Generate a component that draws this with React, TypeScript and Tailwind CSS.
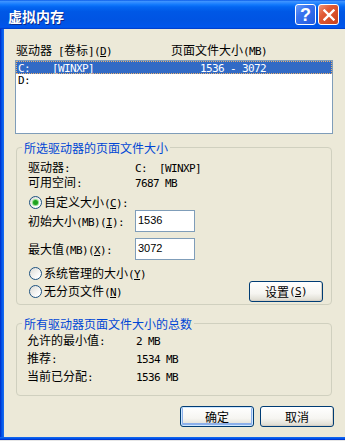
import React from "react";

const CJK = /[\u2E80-\u9FFF\uF900-\uFAFF\uFF00-\uFFEF]/;

function M({ t }: { t: string }) {
  const runs: { cjk: boolean; s: string }[] = [];
  for (const ch of t) {
    const c = CJK.test(ch);
    const last = runs[runs.length - 1];
    if (last && last.cjk === c) last.s += ch;
    else runs.push({ cjk: c, s: ch });
  }
  return (
    <>
      {runs.map((r, i) =>
        r.cjk ? (
          <span key={i} className="font-['Noto_Sans_CJK_SC',sans-serif] text-[12px]">
            {r.s}
          </span>
        ) : (
          <span key={i} className="font-['DejaVu_Sans_Mono',monospace] text-[11px] tracking-[-0.62px]">
            {r.s.split(/(&.)/).map((p, j) =>
              p.length === 2 && p[0] === "&" ? (
                <span key={j} className="underline underline-offset-[1px]">
                  {p[1]}
                </span>
              ) : (
                p
              )
            )}
          </span>
        )
      )}
    </>
  );
}

function Radio({ on }: { on?: boolean }) {
  return (
    <span className="w-[13px] h-[13px] rounded-full border border-[#1C5180] bg-[linear-gradient(135deg,#DCDBD5,#FFFFFF_80%)] flex items-center justify-center shrink-0">
      {on && <span className="w-[5px] h-[5px] rounded-full bg-[#1FA11F] shadow-[0_0_0_1px_#8EE08E]" />}
    </span>
  );
}

function Btn({ children, def }: { children: React.ReactNode; def?: boolean }) {
  return (
    <div
      className={
        def
          ? "w-[74px] h-[21px] rounded-[3px] border border-[#003C74] bg-[linear-gradient(180deg,#FFFFFF_0%,#F6F5F1_60%,#E3E1D8_90%,#D6D0C5_100%)] flex items-center justify-center shadow-[inset_0_0_0_1px_#CEE7FF,inset_0_-1px_0_2px_#8DB0EA]"
          : "w-[74px] h-[21px] rounded-[3px] border border-[#003C74] bg-[linear-gradient(180deg,#FFFFFF_0%,#F6F5F1_60%,#E3E1D8_90%,#D6D0C5_100%)] flex items-center justify-center shadow-[inset_-1px_-1px_0_0_#D6D0C5]"
      }
    >
      {children}
    </div>
  );
}

export default function App() {
  return (
    <div className="w-[345px] h-[441px] flex flex-col overflow-hidden bg-[#ECE9D8] text-black leading-[12px] whitespace-pre relative">
      {/* title bar */}
      <div className="h-[29px] shrink-0 flex items-center pl-[8px] pr-[6px] bg-[linear-gradient(180deg,#0A5AE8_0%,#3D93FF_5%,#2A88FF_10%,#1279FC_16%,#0366F2_24%,#0058E6_40%,#0054E3_70%,#0055EA_88%,#0058EE_94%,#0036C2_100%)]">
        <span className="flex-1 mt-[2px] text-white font-bold text-[14px] leading-[14px] font-['Noto_Sans_CJK_SC',sans-serif] [text-shadow:1px_1px_0_#0A2A8A]">
          虚拟内存
        </span>
        <div className="flex gap-[2px]">
          <div className="w-[21px] h-[21px] rounded-[3px] border border-white bg-[linear-gradient(135deg,#6C9CF8_0%,#3A74F0_35%,#2259DE_100%)] flex items-center justify-center">
            <span className="text-white font-bold text-[18px] leading-[18px] font-['Liberation_Sans',sans-serif]">?</span>
          </div>
          <div className="w-[21px] h-[21px] rounded-[3px] border border-white bg-[linear-gradient(135deg,#F0967A_0%,#E15A35_35%,#C8411C_100%)] flex items-center justify-center">
            <svg width="12" height="12" viewBox="0 0 12 12">
              <path d="M1.5 1.5L10.5 10.5M10.5 1.5L1.5 10.5" stroke="white" strokeWidth="2.4" strokeLinecap="square" />
            </svg>
          </div>
        </div>
      </div>

      {/* body */}
      <div className="flex-1 flex min-h-0">
        <div className="w-[4px] shrink-0 bg-[linear-gradient(90deg,#0028C4,#0055EA_45%,#1A6CEE)]" />
        <div className="flex-1 flex flex-col pl-[11px] pr-[11px] pt-[15px]">
          {/* list header */}
          <div className="flex pl-[1px] h-[12px] items-center">
            <div className="w-[155px]">
              <M t="驱动器 [卷标](&D)" />
            </div>
            <div>
              <M t="页面文件大小(MB)" />
            </div>
          </div>
          {/* list box */}
          <div className="mt-[4px] w-[318px] h-[74px] border border-[#7F9DB9] bg-white flex flex-col">
            <div className="h-[13px] flex items-center bg-[#316AC5] text-white pl-[2px] outline outline-1 outline-dotted outline-[#E8B070] -outline-offset-1">
              <div className="w-[34px]">
                <M t="C:" />
              </div>
              <div className="w-[148px]">
                <M t="[WINXP]" />
              </div>
              <div>
                <M t="1536 - 3072" />
              </div>
            </div>
            <div className="h-[13px] flex items-center pl-[2px]">
              <M t="D:" />
            </div>
          </div>

          {/* group 1 */}
          <fieldset className="mt-[7px] ml-[1px] w-[316px] border border-[#D0D0BF] rounded-[4px] pl-[5px] pr-[8px] pb-[2px]">
            <legend className="px-[2px] text-[#0046D5] leading-[12px]">
              <M t="所选驱动器的页面文件大小" />
            </legend>
            <div className="pl-[6px] pt-[6px] flex flex-col">
              <div className="flex h-[15px] items-center">
                <div className="w-[107px]">
                  <M t="驱动器:" />
                </div>
                <div>
                  <M t="C:  [WINXP]" />
                </div>
              </div>
              <div className="flex h-[15px] items-center">
                <div className="w-[107px]">
                  <M t="可用空间:" />
                </div>
                <div>
                  <M t="7687 MB" />
                </div>
              </div>
              <div className="flex h-[15px] items-center mt-[5px] pl-[1px] gap-[2px]">
                <Radio on />
                <div>
                  <M t="自定义大小(&C):" />
                </div>
              </div>
              <div className="flex h-[22px] items-center">
                <div className="w-[107px]">
                  <M t="初始大小(MB)(&I):" />
                </div>
                <div className="w-[60px] h-[22px] border border-[#7F9DB9] bg-white pl-[2px] pt-[3px] font-['Liberation_Sans',sans-serif] text-[11px] leading-[13px]">
                  1536
                </div>
              </div>
              <div className="flex h-[22px] items-center mt-[6px]">
                <div className="w-[107px]">
                  <M t="最大值(MB)(&X):" />
                </div>
                <div className="w-[60px] h-[22px] border border-[#7F9DB9] bg-white pl-[2px] pt-[3px] font-['Liberation_Sans',sans-serif] text-[11px] leading-[13px]">
                  3072
                </div>
              </div>
              <div className="flex h-[15px] items-center mt-[6px] pl-[1px] gap-[2px]">
                <Radio />
                <div>
                  <M t="系统管理的大小(&Y)" />
                </div>
              </div>
              <div className="flex h-[21px] items-center justify-between">
                <div className="flex items-center pl-[1px] gap-[2px]">
                  <Radio />
                  <div>
                    <M t="无分页文件(&N)" />
                  </div>
                </div>
                <Btn>
                  <M t="设置(&S)" />
                </Btn>
              </div>
            </div>
          </fieldset>

          {/* group 2 */}
          <fieldset className="mt-[12px] ml-[1px] w-[316px] border border-[#D0D0BF] rounded-[4px] pl-[5px] pr-[8px] pb-[10px]">
            <legend className="px-[2px] text-[#0046D5] leading-[12px]">
              <M t="所有驱动器页面文件大小的总数" />
            </legend>
            <div className="pl-[5px] pt-[1px] flex flex-col">
              <div className="flex h-[18px] items-center">
                <div className="w-[109px]">
                  <M t="允许的最小值:" />
                </div>
                <div>
                  <M t="2 MB" />
                </div>
              </div>
              <div className="flex h-[18px] items-center">
                <div className="w-[109px]">
                  <M t="推荐:" />
                </div>
                <div>
                  <M t="1534 MB" />
                </div>
              </div>
              <div className="flex h-[18px] items-center">
                <div className="w-[109px]">
                  <M t="当前已分配:" />
                </div>
                <div>
                  <M t="1536 MB" />
                </div>
              </div>
            </div>
          </fieldset>

          {/* buttons */}
          <div className="mt-[10px] flex justify-end gap-[6px]">
            <Btn def>
              <M t="确定" />
            </Btn>
            <Btn>
              <M t="取消" />
            </Btn>
          </div>
        </div>
      </div>

      <div className="h-[3px] shrink-0 bg-[linear-gradient(180deg,#1A6CEE,#0055EA_50%,#0028C4)]" />
      <div className="h-[1px] shrink-0 bg-[#E6E6E6]" />
    </div>
  );
}
